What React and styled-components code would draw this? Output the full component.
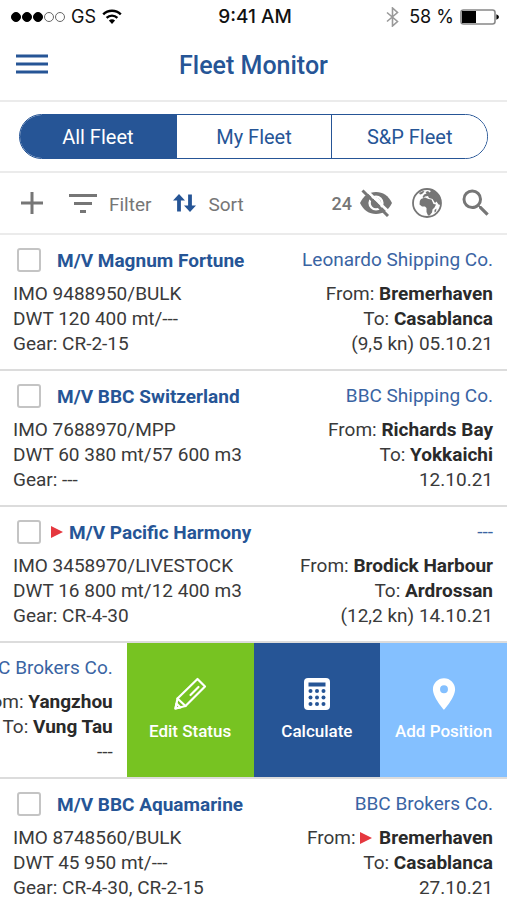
import React, { useState } from "react"
import styled, { createGlobalStyle } from "styled-components"
import { MdSearch, MdLocationOn } from "react-icons/md"

const vessels = [
  {
    name: "M/V Magnum Fortune",
    specs: ["IMO 9488950/BULK", "DWT 120 400 mt/---", "Gear: CR-2-15"],
    company: "Leonardo Shipping Co.",
    from: "Bremerhaven",
    to: "Casablanca",
    date: "(9,5 kn) 05.10.21",
  },
  {
    name: "M/V BBC Switzerland",
    specs: ["IMO 7688970/MPP", "DWT 60 380 mt/57 600 m3", "Gear: ---"],
    company: "BBC Shipping Co.",
    from: "Richards Bay",
    to: "Yokkaichi",
    date: "12.10.21",
  },
  {
    name: "M/V Pacific Harmony",
    flagged: true,
    specs: ["IMO 3458970/LIVESTOCK", "DWT 16 800 mt/12 400 m3", "Gear: CR-4-30"],
    company: "---",
    from: "Brodick Harbour",
    to: "Ardrossan",
    date: "(12,2 kn) 14.10.21",
  },
  {
    swiped: true,
    company: "BBC Brokers Co.",
    from: "Yangzhou",
    to: "Vung Tau",
    date: "---",
  },
  {
    name: "M/V BBC Aquamarine",
    specs: ["IMO 8748560/BULK", "DWT 45 950 mt/---", "Gear: CR-4-30, CR-2-15"],
    company: "BBC Brokers Co.",
    from: "Bremerhaven",
    fromFlagged: true,
    to: "Casablanca",
    date: "27.10.21",
  },
]

const tabs = ["All Fleet", "My Fleet", "S&P Fleet"]

function StatusBar() {
  return (
    <Status>
      <StatusSide>
        <Dots>
          <Dot $on />
          <Dot $on />
          <Dot $on />
          <Dot />
          <Dot />
        </Dots>
        <span>GS</span>
        <svg width="20" height="15" viewBox="0 0 20 15" fill="none" stroke="#000">
          <path d="M1.2 5.4a12.6 12.6 0 0 1 17.6 0" strokeWidth="2.4" />
          <path d="M4.6 8.8a7.8 7.8 0 0 1 10.8 0" strokeWidth="2.4" />
          <path d="M10 15 6.9 11.6a4.6 4.6 0 0 1 6.2 0z" fill="#000" stroke="none" />
        </svg>
      </StatusSide>
      <Clock>9:41 AM</Clock>
      <StatusSide $end>
        <svg width="13" height="20" viewBox="0 0 13 20" fill="none" stroke="#999" strokeWidth="1.6">
          <path d="M1 5.5 11.5 14.5 6.5 19V1l5 4.5L1 14.5" />
        </svg>
        <Percent>58 %</Percent>
        <svg width="39" height="16" viewBox="0 0 39 16">
          <rect x="1" y="1" width="34" height="14" rx="2.5" fill="#fff" stroke="#888" strokeWidth="1.6" />
          <path d="M2 2h14v12H2z" fill="#000" />
          <path d="M36.4 5.2q2.6 1 2.6 2.8t-2.6 2.8z" fill="#000" />
        </svg>
      </StatusSide>
    </Status>
  )
}

function PlusIcon() {
  return (
    <svg width="22" height="22" viewBox="0 0 22 22" stroke="#767676" strokeWidth="3">
      <path d="M11 0v22M0 11h22" />
    </svg>
  )
}

function FilterIcon() {
  return (
    <svg width="28" height="19" viewBox="0 0 28 19" stroke="#767676" strokeWidth="3">
      <path d="M0 1.5h28M5 9.5h18M11 17.5h6" />
    </svg>
  )
}

function SortIcon() {
  return (
    <svg width="23" height="18" viewBox="0 0 23 18" fill="#265596">
      <path d="M6 0 12 6.6H7.9V17.5H4.100V6.600H0z" />
      <path d="M17 18 11 11.400h4.100V.5h3.800v10.900H23z" />
    </svg>
  )
}

function EyeOffIcon() {
  return (
    <svg width="32" height="28" viewBox="0 0 32 28">
      <path d="M0 14C3.5 6.8 9 3 16 3s12.5 3.8 16 11c-3.5 7.2-9 11-16 11S3.5 21.2 0 14z" fill="#767676" />
      <circle cx="16" cy="14" r="6.4" fill="none" stroke="#fff" strokeWidth="2.4" />
      <path d="M14.500 11a3 3 0 0 1 4.500 4" fill="none" stroke="#fff" strokeWidth="1.8" />
      <path d="M4.5-.5 31 25" stroke="#fff" strokeWidth="2.6" />
      <path d="M2.5 1.5 28 27" stroke="#767676" strokeWidth="3" />
    </svg>
  )
}

function GlobeIcon() {
  return (
    <svg width="30" height="30" viewBox="0 0 30 30" fill="#767676">
      <circle cx="15" cy="15" r="14" fill="none" stroke="#767676" strokeWidth="1.8" />
      {/* Europe and Asia */}
      <path d="M16 1C22 1 27.500 5.500 29 12v5l-2.500-.5-2-3-1.500 1.500-2.500-4-3.500-1-1-2-3 .500-1.500 1.500-1-1 1.500-2.500 2.500-1-1-1.500 2.500-1 1.500 1.500 1.500-1.500z" />
      {/* Africa */}
      <path d="M9 11l4-1.500 3.500 1.500 3 .500 2 4.500 2.500.500-1.500 3-2 2-.5 3-2.500 3h-1.500l-1.500-3.500v-4l-1.500-1.500h-3L7.500 16.500 7.800 13z" />
      <path d="M22.500 22l2-1.500-.5 3-1.500 1z" />
      {/* Greenland */}
      <path d="M7 5l4-2 1.500.5-2.500 2.500-2 .5z" />
    </svg>
  )
}

function PencilIcon() {
  return (
    <svg width="34" height="34" viewBox="0 0 34 34" fill="none" stroke="#fff" strokeWidth="2.2" strokeLinejoin="round" strokeLinecap="round">
      <path d="M2.5 31.5 4.500 21.500 24.5 2 32 9.5 12.5 29z" />
      <path d="M4.500 21.500l8 7.500M17.500 18l8-8M2.500 31.500l1-5 4 4z" />
    </svg>
  )
}

function CalculatorIcon() {
  return (
    <svg width="26" height="32" viewBox="0 0 26 32">
      <rect width="26" height="32" rx="4" fill="#fff" />
      <rect x="4.5" y="4.5" width="17" height="4" fill="#265596" />
      {[13, 19.5, 26].map((cy) =>
        [6.5, 13, 19.5].map((cx) => <circle key={cx + "-" + cy} cx={cx} cy={cy} r="2" fill="#265596" />)
      )}
    </svg>
  )
}

function Flag() {
  return (
    <svg width="12" height="12" viewBox="0 0 12 12">
      <path d="M0 0 12 6 0 12z" fill="#e5383f" />
    </svg>
  )
}

function Voyage({ vessel }) {
  return (
    <Side $end>
      <Company href="#company">{vessel.company}</Company>
      <Line>
        From: {vessel.fromFlagged && <Flag />} <strong>{vessel.from}</strong>
      </Line>
      <Line>
        To: <strong>{vessel.to}</strong>
      </Line>
      <Line>{vessel.date}</Line>
    </Side>
  )
}

function Vessel({ vessel }) {
  return (
    <Row>
      <Info>
        {vessel.name && (
          <Side>
            <Name>
              <Check type="checkbox" />
              {vessel.flagged && <Flag />}
              <span>{vessel.name}</span>
            </Name>
            {vessel.specs.map((spec) => (
              <Line key={spec}>{spec}</Line>
            ))}
          </Side>
        )}
        <Voyage vessel={vessel} />
      </Info>
      {vessel.swiped && (
        <>
          <Action $bg="#77c322">
            <PencilIcon />
            Edit Status
          </Action>
          <Action $bg="#265596">
            <CalculatorIcon />
            Calculate
          </Action>
          <Action $bg="#84c0ff">
            <MdLocationOn size={38} />
            Add Position
          </Action>
        </>
      )}
    </Row>
  )
}

function App() {
  const [tab, setTab] = useState(tabs[0])

  return (
    <>
      <GlobalStyle />
      <StatusBar />
      <Header>
        <Menu aria-label="Menu">
          <svg width="32" height="20" viewBox="0 0 32 20" stroke="#265596" strokeWidth="3">
            <path d="M0 2h32M0 10h32M0 18h32" />
          </svg>
        </Menu>
        <Title>Fleet Monitor</Title>
      </Header>
      <TabBar>
        <Tabs>
          {tabs.map((name) => (
            <Tab key={name} $active={name === tab} aria-pressed={name === tab} onClick={() => setTab(name)}>
              {name}
            </Tab>
          ))}
        </Tabs>
      </TabBar>
      <Toolbar>
        <Tool aria-label="Add">
          <PlusIcon />
        </Tool>
        <Tool>
          <FilterIcon />
          <ToolLabel>Filter</ToolLabel>
        </Tool>
        <Tool>
          <SortIcon />
          <ToolLabel>Sort</ToolLabel>
        </Tool>
        <ToolGroup>
          <Hidden aria-label="24 hidden">
            24
            <EyeOffIcon />
          </Hidden>
          <Tool aria-label="Map">
            <GlobeIcon />
          </Tool>
          <Tool aria-label="Search">
            <MdSearch size={36} />
          </Tool>
        </ToolGroup>
      </Toolbar>
      <main>
        {vessels.map((vessel, i) => (
          <Vessel key={i} vessel={vessel} />
        ))}
      </main>
    </>
  )
}

export default App

const GlobalStyle = createGlobalStyle`
  * {
    box-sizing: border-box;
  }
  body {
    margin: 0;
    background: #fff;
    color: #3a3a3a;
    font-family: Roboto, "Liberation Sans", sans-serif;
    overflow-x: hidden;
  }
  button {
    padding: 0;
    border: 0;
    background: none;
    font-family: inherit;
  }
  svg {
    display: block;
    flex-shrink: 0;
  }
`
const Status = styled.div`
  display: grid;
  grid-template-columns: 1fr auto 1fr;
  align-items: center;
  height: 33px;
  padding: 0 8px 0 11px;
  color: #111;
  font-family: Inter, "Liberation Sans", sans-serif;
  font-size: 18px;
`
const StatusSide = styled.div`
  display: flex;
  align-items: center;
  gap: 6px;
  justify-content: ${(props) => (props.$end ? "flex-end" : "flex-start")};
`
const Dots = styled.div`
  display: flex;
  gap: 1px;
`
const Dot = styled.span`
  width: 10px;
  height: 10px;
  border: 1px solid ${(props) => (props.$on ? "#000" : "#666")};
  border-radius: 50%;
  background: ${(props) => (props.$on ? "#000" : "#fff")};
`
const Clock = styled.span`
  font-size: 19px;
  font-weight: 500;
`
const Percent = styled.span`
  padding-left: 4px;
`
const Header = styled.header`
  display: grid;
  grid-template-columns: 1fr auto 1fr;
  align-items: center;
  height: 69px;
  padding: 0 16px 6px;
  border-bottom: 2px solid #ebebeb;
`
const Menu = styled.button`
  justify-self: start;
`
const Title = styled.h1`
  margin: 0;
  padding-top: 3px;
  color: #265596;
  font-size: 25px;
  font-weight: 500;
`
const TabBar = styled.div`
  padding: 12px 19px;
  border-bottom: 2px solid #ebebeb;
`
const Tabs = styled.div`
  display: grid;
  grid-template-columns: repeat(3, 1fr);
  height: 45px;
  overflow: hidden;
  border: 1px solid #265596;
  border-radius: 23px;
`
const Tab = styled.button`
  color: ${(props) => (props.$active ? "#fff" : "#265596")};
  background: ${(props) => (props.$active ? "#265596" : "#fff")};
  font-size: 20px;

  & + & {
    border-left: 1px solid #265596;
  }
`
const Toolbar = styled.div`
  display: flex;
  align-items: center;
  gap: 22px;
  height: 62px;
  padding: 0 13px 0 21px;
  border-bottom: 2px solid #ebebeb;
`
const Tool = styled.button`
  display: flex;
  align-items: center;
  gap: 12px;
  color: #767676;
  font-size: 19px;

  &:first-child {
    margin-right: 4px;
  }
`
const ToolLabel = styled.span`
  padding-top: 3px;
`
const ToolGroup = styled.div`
  display: flex;
  align-items: center;
  gap: 16px;
  margin-left: auto;
`
const Hidden = styled(Tool)`
  gap: 8px;
  font-size: 18px;
  font-weight: 500;
`
const Row = styled.section`
  display: flex;
  justify-content: flex-end;
  overflow: hidden;
  border-bottom: 2px solid #dcdcdc;
`
const Info = styled.div`
  display: flex;
  flex: 0 0 100%;
  padding: 8px 14px 13px 13px;
`
const Side = styled.div`
  flex: 1 0 auto;
  text-align: ${(props) => (props.$end ? "right" : "left")};
`
const Name = styled.label`
  display: flex;
  align-items: center;
  gap: 6px;
  height: 34px;
  margin-bottom: 4px;
  color: #265596;
  font-size: 19px;
  font-weight: 700;

  input + span {
    margin-left: 6px;
  }
`
const Check = styled.input`
  appearance: none;
  width: 24px;
  height: 24px;
  margin: 0 4px;
  border: 2px solid #c4c4c4;
  border-radius: 3px;
  background: #fff;
`
const Company = styled.a`
  display: block;
  margin-bottom: 4px;
  color: #3a64a3;
  font-size: 19px;
  line-height: 34px;
  text-decoration: none;
`
const Line = styled.div`
  font-size: 19px;
  line-height: 25px;
  white-space: nowrap;

  strong {
    color: #2a2a2a;
  }
  svg {
    display: inline-block;
    margin-right: 2px;
  }
`
const Action = styled.button`
  display: flex;
  flex: 0 0 25%;
  flex-direction: column;
  align-items: center;
  justify-content: center;
  gap: 8px;
  padding-bottom: 4px;
  background: ${(props) => props.$bg};
  color: #fff;
  font-size: 17px;
  font-weight: 500;

  svg {
    height: 38px;
  }
`
